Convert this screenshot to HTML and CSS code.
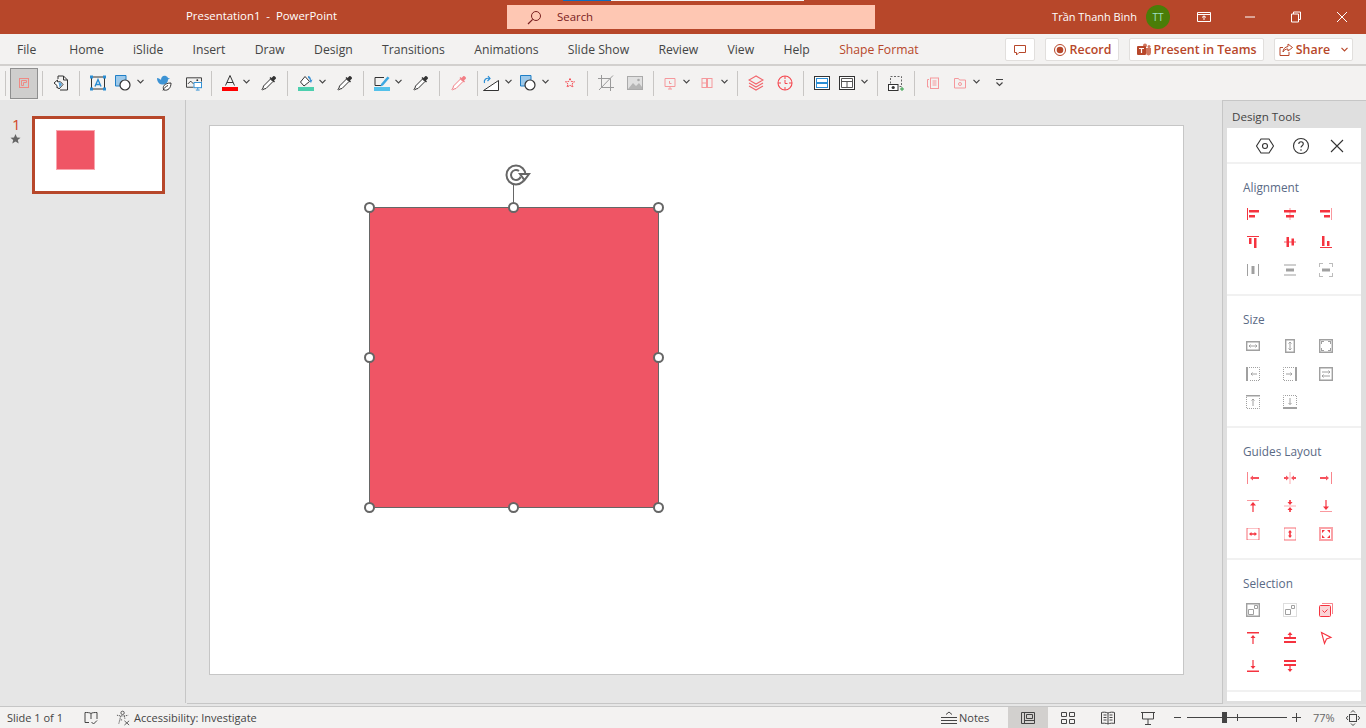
FILE: index.html
```html
<!DOCTYPE html>
<html lang="en">
<head>
  <meta charset="UTF-8">
  <title>Presentation1 - PowerPoint</title>
  <link rel="stylesheet" href="styles.css">
</head>
<body>

  <svg class="sprite" xmlns="http://www.w3.org/2000/svg">
    <defs>
      <!-- toolbar icons -->
      <symbol id="t-slide" viewBox="0 0 16 16"><g fill="none" stroke="#ef8a84"><rect x="3.5" y="3.5" width="9" height="9"/><path d="M5.5 5.5h5v2h-3v3h-2z"/></g></symbol>
      <symbol id="t-doc" viewBox="0 0 16 16"><path d="M5 1h5.500l4 4v10H7M10.500 1v4h4M5 1v3" fill="none" stroke="#333"/><path d="M1 8l3.500-3v1.800h3L10 9.500 6 14l-1-1.500-1 .5v-2.500z" fill="#fff" stroke="#333"/><path d="M5.500 7.500h2l1.500 2-2.500 3z" fill="#5aa5dc"/></symbol>
      <symbol id="t-textbox" viewBox="0 0 16 16"><rect x="1.500" y="2" width="13" height="12" fill="none" stroke="#333"/><g fill="#fff" stroke="#2a8dd4"><rect x=".5" y="1" width="2" height="2"/><rect x="13.500" y="1" width="2" height="2"/><rect x=".5" y="13" width="2" height="2"/><rect x="13.500" y="13" width="2" height="2"/></g><path d="M5 11.500L8 4.500l3 7M6 9.500h4" fill="none" stroke="#2a8dd4" stroke-width="1.400"/></symbol>
      <symbol id="t-shapes" viewBox="0 0 16 16"><path d="M.5.500h10.500v5.500a5 5 0 0 0-5 5H.5z" fill="#9dc9ea" stroke="#1f7fc7"/><circle cx="10" cy="10" r="5" fill="#fff" stroke="#333" stroke-width="1.200"/></symbol>
      <symbol id="t-bird" viewBox="0 0 16 16"><path d="M1 3c2 0 3 1 4 2 0-3 2-5 5-4 1 .5 1.500 1 2 2l2 .5-2 1c0 3-2 5-6 5-3 0-5-3-5-6.500z" fill="#3d93d4"/><path d="M8 15c-2-3 0-7 7-7 0 5-3 8-7 7zM7 15.500c1-3 3-4 5-5" fill="#fff" stroke="#333"/></symbol>
      <symbol id="t-pic" viewBox="0 0 17 16"><path d="M8 12.500H.5v-10h16v4" fill="none" stroke="#333"/><path d="M2 9l3-3 3 3" fill="none" stroke="#333"/><circle cx="12" cy="5" r="1" fill="#333"/><rect x="8.500" y="7.500" width="8" height="5.500" fill="#fff" stroke="#2a8dd4"/><path d="M12.500 13v2M10.500 15.500h4" stroke="#2a8dd4"/></symbol>
      <symbol id="t-fontcolor" viewBox="0 0 16 16"><path d="M3.500 10.500L8 .5l4.500 10M5 7.500h6" fill="none" stroke="#333"/><rect y="12" width="16" height="4" fill="#f00"/></symbol>
      <symbol id="t-dropper" viewBox="0 0 16 16"><path d="M9.500 4L2.500 11l-.5 2-1 1.500.5.500L3 14l2-.5 7-7z" fill="#fff" stroke="#333"/><path d="M8.500 3l1-1 1 1 2-2c1-.5 3 1.500 2.500 2.500l-2 2 1 1-1 1z" fill="#333"/></symbol>
      <symbol id="t-dropper-pink" viewBox="0 0 16 16"><path d="M9.500 4L2.500 11l-.5 2-1 1.500.5.500L3 14l2-.5 7-7z" fill="#fff" stroke="#f27f86"/><path d="M8.500 3l1-1 1 1 2-2c1-.5 3 1.500 2.500 2.500l-2 2 1 1-1 1z" fill="#f27f86"/></symbol>
      <symbol id="t-fill" viewBox="0 0 16 16"><path d="M7 1.500l4.500 5L6 11 2.500 7z" fill="#fff" stroke="#333"/><path d="M10 1c2 0 3 2 3 4l1.500-.5L13 8l-2-2.500 1 .5c0-1.500-1-3-2-3z" fill="#3d93d4"/><rect y="12" width="16" height="4" fill="#4ccfae"/></symbol>
      <symbol id="t-pen" viewBox="0 0 16 16"><path d="M10 2.500H1v8h6" fill="none" stroke="#333"/><path d="M7 9L13.500 1.500l2 1.500L9 10.500l-2.500 1z" fill="#3da8e0"/><rect y="12" width="16" height="4" fill="#54c1ea"/></symbol>
      <symbol id="t-connect" viewBox="0 0 16 16"><path d="M.5 15.500h15V5.500z" fill="#fff" stroke="#333"/><path d="M1.500 8c-1-3 1.500-5.500 5-4.500M5 1l2 2.500L4.500 6" fill="none" stroke="#2a8dd4" stroke-width="1.200"/></symbol>
      <symbol id="t-star" viewBox="0 0 16 16"><path d="M8 3.500l1.300 3 3.200.3-2.400 2.100.8 3.100L8 10.300l-2.900 1.700.8-3.100-2.400-2.100 3.200-.3z" fill="none" stroke="#f5474f" stroke-dasharray="2 .8"/></symbol>
      <symbol id="t-crop" viewBox="0 0 16 16"><path d="M3.500 0v12.500H16M0 3.500h12.500V16M15 .5L1 15" fill="none" stroke="#9a9a9a"/></symbol>
      <symbol id="t-image" viewBox="0 0 16 16"><rect x=".5" y="1.500" width="15" height="13" fill="#e0e0e0" stroke="#aaa"/><path d="M1 14l5-6 3 3 3-3 3 4v2z" fill="#b5b5b5"/><circle cx="11.500" cy="5" r="1.300" fill="#aaa"/></symbol>
      <symbol id="t-monitor" viewBox="0 0 16 16"><path d="M3 3.500h10v8H3zM6 14h4M8 11.500V14M7.500 6v2.500h2" fill="none" stroke="#f5989c"/></symbol>
      <symbol id="t-grid80" viewBox="0 0 16 16"><g fill="none" stroke="#f5989c"><rect x="3" y="3.500" width="4.500" height="9"/><rect x="8.500" y="3.500" width="4.500" height="9"/><path d="M3 8h4.500"/></g></symbol>
      <symbol id="t-layers" viewBox="0 0 16 16"><g fill="none" stroke="#f2656c" stroke-width="1.100"><path d="M8 1L1 5l7 4 7-4z"/><path d="M1 8l7 4 7-4M1 11l7 4 7-4"/></g></symbol>
      <symbol id="t-clock" viewBox="0 0 16 16"><circle cx="8" cy="8" r="7" fill="none" stroke="#f5474f" stroke-width="1.100"/><path d="M8 1v3M8 12v3M1 8h3M12 8h3M8 5v3.500h2.500" fill="none" stroke="#f5474f"/></symbol>
      <symbol id="t-arr1" viewBox="0 0 16 16"><rect x=".5" y="1.500" width="15" height="13" fill="#fff" stroke="#333"/><rect x="2.500" y="3.500" width="11" height="4" fill="none" stroke="#2a8dd4"/><rect x="2.500" y="8.500" width="11" height="4" fill="none" stroke="#2a8dd4"/></symbol>
      <symbol id="t-arr2" viewBox="0 0 16 16"><rect x=".5" y="1.500" width="15" height="13" fill="#fff" stroke="#333"/><path d="M2.500 3.500h11v9h-11zM2.500 6.500h11M8 6.500v6" fill="none" stroke="#555"/></symbol>
      <symbol id="t-shot" viewBox="0 0 16 16"><rect x="2.500" y="1.500" width="11" height="10" fill="none" stroke="#666" stroke-dasharray="2 1.500"/><rect x=".5" y="9.500" width="9.500" height="6" fill="#fff" stroke="#333"/><circle cx="5.200" cy="12.500" r="1.600" fill="#333"/><path d="M12 14h4M14 12v4" stroke="#2f9e44"/></symbol>
      <symbol id="t-pages" viewBox="0 0 16 16"><g fill="none" stroke="#f5989c"><rect x="5.500" y="3" width="8" height="10.500"/><path d="M4 4.500H2.500v7.500H4M7.500 6h4M7.500 8h4M7.500 10h4"/></g></symbol>
      <symbol id="t-folder" viewBox="0 0 16 16"><path d="M2.500 3.500h4l1 1.500h6v8h-11z" fill="none" stroke="#f5989c"/><circle cx="8" cy="9" r="1.500" fill="none" stroke="#f5989c"/></symbol>

      <!-- title and ribbon -->
      <symbol id="c-chev" viewBox="0 0 7 5"><path d="M.5 .8L3.500 3.800 6.500 .8" fill="none" stroke="#444" stroke-width="1.200"/></symbol>
      <symbol id="c-overflow" viewBox="0 0 7 8"><path d="M0 .5h7" stroke="#444"/><path d="M.5 3.500L3.500 6.500 6.500 3.500" fill="none" stroke="#444" stroke-width="1.200"/></symbol>

      <!-- design tools panel -->
      <symbol id="p-al-left" viewBox="0 0 14 14"><path d="M1 1h1v12H1z"/><path d="M3 3h10v2.500H3zM3 8h6v2.500H3z"/></symbol>
      <symbol id="p-al-center" viewBox="0 0 14 14"><path d="M6.500 1h1v12h-1z" opacity=".5"/><path d="M1 3h12v2.500H1zM3 8h8v2.500H3z"/></symbol>
      <symbol id="p-al-right" viewBox="0 0 14 14"><path d="M12 1h1v12h-1z" opacity=".5"/><path d="M1 3h10v2.500H1zM5 8h6v2.500H5z"/></symbol>
      <symbol id="p-al-top" viewBox="0 0 14 14"><path d="M1 1h12v1H1z"/><path d="M3 3h2.500v6H3zM8 3h2.500v10H8z"/></symbol>
      <symbol id="p-al-mid" viewBox="0 0 14 14"><path d="M1 6.500h12v1H1z" opacity=".8"/><path d="M3.500 2H6v10H3.500zM8.500 3.500H11v7H8.500z"/></symbol>
      <symbol id="p-al-bot" viewBox="0 0 14 14"><path d="M1 12h12v1H1z"/><path d="M3 1h2.500v10H3zM8 6h2.500v5H8z"/></symbol>
      <symbol id="p-dist-h" viewBox="0 0 14 14"><path d="M1 1h1v12H1zM12 1h1v12h-1z"/><path d="M5.500 3h3v8h-3z"/></symbol>
      <symbol id="p-dist-v" viewBox="0 0 14 14"><path d="M1 1.500h12v1H1zM1 11.500h12v1H1z"/><path d="M3 5.500h8v3H3z"/></symbol>
      <symbol id="p-dist-b" viewBox="0 0 14 14"><path d="M0 0h4v1H1v3H0zM10 0h4v4h-1V1h-3zM0 10h1v3h3v1H0zM13 10h1v4h-4v-1h3z" opacity=".7"/><path d="M3 5.500h8v3H3z"/></symbol>

      <symbol id="p-sz-w" viewBox="0 0 14 14"><path d="M.7 2.700h12.600v8.600H.7z" fill="none" stroke="currentColor" stroke-width="1.400"/><path d="M3 7h8M4.500 5.500L3 7l1.500 1.500M9.500 5.500L11 7 9.500 8.500" fill="none" stroke="currentColor"/></symbol>
      <symbol id="p-sz-h" viewBox="0 0 14 14"><path d="M2.700.7h8.600v12.600H2.700z" fill="none" stroke="currentColor" stroke-width="1.400"/><path d="M7 3v8M5.500 4.500L7 3l1.500 1.500M5.500 9.500L7 11l1.500-1.500" fill="none" stroke="currentColor"/></symbol>
      <symbol id="p-sz-b" viewBox="0 0 14 14"><path d="M.7.700h12.600v12.600H.7z" fill="none" stroke="currentColor" stroke-width="1.400"/><path d="M2 2h3v1H3v2H2zM9 2h3v3h-1V3H9zM2 9h1v2h2v1H2zM11 9h1v3H9v-1h2z"/></symbol>
      <symbol id="p-sz-l" viewBox="0 0 14 14"><path d="M0 0h2v14H0z"/><path d="M3 .5h10.500v13H3" fill="none" stroke="currentColor" stroke-dasharray="1 1"/><path d="M5 7h6M6.500 5.500L5 7l1.500 1.500" fill="none" stroke="currentColor"/></symbol>
      <symbol id="p-sz-r" viewBox="0 0 14 14"><path d="M12 0h2v14h-2z"/><path d="M11 .5H.5v13H11" fill="none" stroke="currentColor" stroke-dasharray="1 1"/><path d="M3 7h6M7.500 5.500L9 7 7.500 8.500" fill="none" stroke="currentColor"/></symbol>
      <symbol id="p-sz-x" viewBox="0 0 14 14"><path d="M.7.700h12.600v12.600H.7z" fill="none" stroke="currentColor" stroke-width="1.400"/><path d="M3 5h8M9.500 3.500L11 5 9.500 6.500M3 9h8M4.500 7.500L3 9l1.500 1.500" fill="none" stroke="currentColor"/></symbol>
      <symbol id="p-sz-t" viewBox="0 0 14 14"><path d="M0 0h14v1.500H0z"/><path d="M.5 2v11.500h13V2" fill="none" stroke="currentColor" stroke-dasharray="1 1"/><path d="M7 4v7M5.500 5.500L7 4l1.500 1.500" fill="none" stroke="currentColor"/></symbol>
      <symbol id="p-sz-d" viewBox="0 0 14 14"><path d="M0 12h14v2H0z"/><path d="M.5 11V.5h13V11" fill="none" stroke="currentColor" stroke-dasharray="1 1"/><path d="M7 3v6.500M5.500 8L7 9.500 8.500 8" fill="none" stroke="currentColor"/></symbol>

      <symbol id="p-g-l" viewBox="0 0 14 14"><path d="M1 1h1v12H1z" opacity=".6"/><path d="M4 7l3-2.500V6h6v2H7v1.500z" opacity=".85"/></symbol>
      <symbol id="p-g-c" viewBox="0 0 14 14"><path d="M6.500 1h1v12h-1z" opacity=".4"/><path d="M1 6h2V4.500L6 7 3 9.500V8H1zM13 6h-2V4.500L8 7l3 2.500V8h2z" opacity=".85"/></symbol>
      <symbol id="p-g-r" viewBox="0 0 14 14"><path d="M12 1h1v12h-1z" opacity=".6"/><path d="M10 7L7 4.500V6H1v2h6v1.500z" opacity=".85"/></symbol>
      <symbol id="p-g-t" viewBox="0 0 14 14"><path d="M1 1h12v1H1z" opacity=".5"/><path d="M7 3l3 3.500H7.600V13H6.400V6.500H4z"/></symbol>
      <symbol id="p-g-m" viewBox="0 0 14 14"><path d="M1 6.500h12v1H1z" opacity=".4"/><path d="M6.200 1h1.600v2H9.500L7 6 4.500 3h1.700zM6.200 13h1.600v-2H9.500L7 8l-2.500 3h1.700z"/></symbol>
      <symbol id="p-g-b" viewBox="0 0 14 14"><path d="M1 12h12v1H1z" opacity=".5"/><path d="M7 11L4 7.500h2.400V1h1.200v6.500H10z"/></symbol>
      <symbol id="p-g-w" viewBox="0 0 14 14"><path d="M.5 1h1v12h-1zM12.500 1h1v12h-1z" opacity=".7"/><path d="M1.500 1.500h11M1.500 12.500h11" stroke="currentColor" opacity=".6" stroke-dasharray="1 1"/><path d="M3 7l2.500-2v1.200h3V5L11 7 8.500 9V7.800h-3V9z"/></symbol>
      <symbol id="p-g-h" viewBox="0 0 14 14"><path d="M1 .5h12v1H1zM1 12.500h12v1H1z" opacity=".7"/><path d="M1.500 1.500v11M12.500 1.500v11" stroke="currentColor" opacity=".5" stroke-dasharray="1 1"/><path d="M7 3l2 2.500H7.800v3H9L7 11 5 8.500h1.200v-3H5z"/></symbol>
      <symbol id="p-g-a" viewBox="0 0 14 14"><path d="M0 0h14v14H0zM2 2v10h10V2z" fill-rule="evenodd" opacity=".45"/><path d="M3 3h3L3 6zM11 3H8l3 3zM3 11h3L3 8zM11 11H8l3-3z"/></symbol>

      <symbol id="p-s-a" viewBox="0 0 14 14"><path d="M.7.700h12.600v12.600H.7z" fill="none" stroke="currentColor" stroke-width="1.400"/><path d="M2.500 6.500h5v5h-5zM8.500 2.500h3v3h-3z" fill="none" stroke="currentColor"/></symbol>
      <symbol id="p-s-b" viewBox="0 0 14 14"><path d="M.5.500h13v13H.5z" fill="none" stroke="currentColor" stroke-dasharray="1 1" opacity=".7"/><path d="M2.500 6.500h5v5h-5zM8.500 2.500h3v3h-3z" fill="none" stroke="currentColor"/></symbol>
      <symbol id="p-s-c" viewBox="0 0 14 14"><path d="M3 .5h10.500V11" fill="none" stroke="currentColor" opacity=".6"/><rect x=".5" y="2.500" width="11" height="11" rx="1" fill="#fbd5d7" stroke="currentColor"/><path d="M3.500 7.500l2 2 3-3" fill="none" stroke="currentColor"/></symbol>
      <symbol id="p-s-d" viewBox="0 0 14 14"><path d="M1 1h12v1.500H1z"/><path d="M7 4l2.500 3H7.600v6H6.400V7H4.500z"/></symbol>
      <symbol id="p-s-e" viewBox="0 0 14 14"><path d="M1 6h12v2H1zM1 10h12v2H1z"/><path d="M7 1l2.500 3H7.600v2H6.400V4H4.500z"/></symbol>
      <symbol id="p-s-f" viewBox="0 0 14 14"><path d="M2.500 1.500l9.500 5-4.500 1.500-2 4.500z" fill="none" stroke="currentColor" stroke-width="1.100"/></symbol>
      <symbol id="p-s-g" viewBox="0 0 14 14"><path d="M1 11.500h12V13H1z"/><path d="M7 10L4.500 7h1.900V1h1.200v6h1.900z"/></symbol>
      <symbol id="p-s-h" viewBox="0 0 14 14"><path d="M1 1h12v2H1zM1 5h12v2H1z"/><path d="M7 13L4.500 10h1.900V7h1.200v3h1.900z"/></symbol>
    </defs>
  </svg>

  <div class="load-bar"><div class="load-bar-fill"></div></div>

  <header class="titlebar">
    <div class="doc-title">Presentation1&nbsp; - &nbsp;PowerPoint</div>
    <div class="search">
      <svg class="search-icon" viewBox="0 0 15 15"><circle cx="9" cy="6" r="4.500" fill="none" stroke="#7a2020"/><path d="M5.700 9.300L1 14" stroke="#7a2020" stroke-width="1.200"/></svg>
      <span>Search</span>
    </div>
    <div class="user-name">Trần Thanh Bình</div>
    <div class="avatar">TT</div>
    <div class="win-buttons">
      <svg class="win-btn" viewBox="0 0 14 12"><path d="M.5 1.500h13v9H.5zM.5 3.500h13M7 9V5M5 6.500L7 4.800l2 1.700" fill="none" stroke="#fff"/></svg>
      <svg class="win-btn" viewBox="0 0 14 12"><path d="M2 6h10" stroke="#fff"/></svg>
      <svg class="win-btn" viewBox="0 0 14 12"><path d="M2.500 3h7v8h-7zM4.500 3V1h7v7.500H9.500" fill="none" stroke="#fff"/></svg>
      <svg class="win-btn" viewBox="0 0 14 12"><path d="M2 1l10 10M12 1L2 11" stroke="#fff"/></svg>
    </div>
  </header>

  <nav class="tabs">
    <a class="tab tab-file">File</a>
    <a class="tab">Home</a>
    <a class="tab">iSlide</a>
    <a class="tab">Insert</a>
    <a class="tab">Draw</a>
    <a class="tab">Design</a>
    <a class="tab">Transitions</a>
    <a class="tab">Animations</a>
    <a class="tab">Slide Show</a>
    <a class="tab">Review</a>
    <a class="tab">View</a>
    <a class="tab">Help</a>
    <a class="tab tab-active">Shape Format</a>
    <div class="tab-actions">
      <button class="action action-comment">
        <svg class="action-icon" viewBox="0 0 14 14"><path d="M1.500 2.500h11v7H6L3.500 12V9.500h-2z" fill="none" stroke="#b7472a"/></svg>
      </button>
      <button class="action action-record">
        <svg class="action-icon" viewBox="0 0 14 14"><circle cx="7" cy="7" r="5.500" fill="none" stroke="#b7472a"/><circle cx="7" cy="7" r="3.300" fill="#b7472a"/></svg>
        Record
      </button>
      <button class="action action-teams">
        <svg class="action-icon" viewBox="0 0 14 14"><circle cx="8" cy="2.500" r="2" fill="#d0775f"/><circle cx="12" cy="3.500" r="1.500" fill="#d0775f"/><path d="M9 5h5v5a2.500 2.500 0 0 1-5 0z" fill="#d0775f"/><rect y="3" width="9" height="9" rx="1" fill="#b7472a"/><path d="M2 5.500h5M4.500 5.500V10" stroke="#fff" stroke-width="1.200"/></svg>
        Present in Teams
      </button>
      <button class="action action-share">
        <svg class="action-icon" viewBox="0 0 14 14"><path d="M4 4.500H1v8h9V9" fill="none" stroke="#b7472a"/><path d="M9 1l4.500 3.500L9 8V6C6.500 6 5 7 4 9c0-3 2-5 5-5.500z" fill="none" stroke="#b7472a"/></svg>
        Share
        <svg class="share-chev" viewBox="0 0 7 5"><path d="M.5 .8L3.500 3.800 6.500 .8" fill="none" stroke="#b7472a" stroke-width="1.200"/></svg>
      </button>
    </div>
  </nav>

  <div class="toolbar">
    <div class="tgroup g37 first-group"><div class="t-selected"><svg class="ti"><use href="#t-slide"/></svg></div></div>
    <div class="tgroup g37"><svg class="ti m10"><use href="#t-doc"/></svg></div>
    <div class="tgroup g132">
      <svg class="ti m10"><use href="#t-textbox"/></svg>
      <svg class="ti m9"><use href="#t-shapes"/></svg>
      <svg class="ch m6"><use href="#c-chev"/></svg>
      <svg class="ti m12"><use href="#t-bird"/></svg>
      <svg class="ti m14"><use href="#t-pic"/></svg>
    </div>
    <div class="tgroup g76">
      <svg class="ti m10"><use href="#t-fontcolor"/></svg>
      <svg class="ch m5"><use href="#c-chev"/></svg>
      <svg class="ti m11"><use href="#t-dropper"/></svg>
    </div>
    <div class="tgroup g76">
      <svg class="ti m10"><use href="#t-fill"/></svg>
      <svg class="ch m5"><use href="#c-chev"/></svg>
      <svg class="ti m11"><use href="#t-dropper"/></svg>
    </div>
    <div class="tgroup g76">
      <svg class="ti m10"><use href="#t-pen"/></svg>
      <svg class="ch m5"><use href="#c-chev"/></svg>
      <svg class="ti m11"><use href="#t-dropper"/></svg>
    </div>
    <div class="tgroup g38"><svg class="ti m11"><use href="#t-dropper-pink"/></svg></div>
    <div class="tgroup g110">
      <svg class="ti m5"><use href="#t-connect"/></svg>
      <svg class="ch m6"><use href="#c-chev"/></svg>
      <svg class="ti m8"><use href="#t-shapes"/></svg>
      <svg class="ch m6"><use href="#c-chev"/></svg>
      <svg class="ti m13"><use href="#t-star"/></svg>
    </div>
    <div class="tgroup g66">
      <svg class="ti m10"><use href="#t-crop"/></svg>
      <svg class="ti m13"><use href="#t-image"/></svg>
    </div>
    <div class="tgroup g84">
      <svg class="ti m8"><use href="#t-monitor"/></svg>
      <svg class="ch m5"><use href="#c-chev"/></svg>
      <svg class="ti m9"><use href="#t-grid80"/></svg>
      <svg class="ch m6"><use href="#c-chev"/></svg>
    </div>
    <div class="tgroup g66">
      <svg class="ti m10"><use href="#t-layers"/></svg>
      <svg class="ti m13"><use href="#t-clock"/></svg>
    </div>
    <div class="tgroup g74">
      <svg class="ti m10"><use href="#t-arr1"/></svg>
      <svg class="ti m9"><use href="#t-arr2"/></svg>
      <svg class="ch m6"><use href="#c-chev"/></svg>
    </div>
    <div class="tgroup g37"><svg class="ti m10"><use href="#t-shot"/></svg></div>
    <div class="tgroup">
      <svg class="ti m10"><use href="#t-pages"/></svg>
      <svg class="ti m11"><use href="#t-folder"/></svg>
      <svg class="ch m5"><use href="#c-chev"/></svg>
      <svg class="ch2 m16"><use href="#c-overflow"/></svg>
    </div>
  </div>

  <main class="workspace">
    <aside class="thumbs">
      <div class="thumb-meta">
        <div class="thumb-num">1</div>
        <svg class="thumb-star" viewBox="0 0 12 12"><path d="M6.500 1l1.500 3.500 3.500.3-2.700 2.300.9 3.500-3.200-2-3.200 2 .9-3.500L1.500 4.800 5 4.500z" fill="#666"/></svg>
      </div>
      <div class="thumb">
        <div class="thumb-shape"></div>
      </div>
    </aside>

    <section class="editor">
      <div class="slide">
        <div class="shape"></div>
        <div class="rotate-line"></div>
        <svg class="rotate-handle" viewBox="0 0 26 24"><circle cx="11" cy="12" r="9.500" fill="none" stroke="#666" stroke-width="2"/><path d="M16 12a5 5 0 1 1-2-4" fill="none" stroke="#666" stroke-width="2"/><path d="M14 12l11-1-5.500 7z" fill="#fff"/><path d="M15 11h9l-4.500 6z" fill="none" stroke="#666" stroke-width="2"/></svg>
        <i class="handle h-tl"></i><i class="handle h-tm"></i><i class="handle h-tr"></i>
        <i class="handle h-ml"></i><i class="handle h-mr"></i>
        <i class="handle h-bl"></i><i class="handle h-bm"></i><i class="handle h-br"></i>
      </div>
    </section>

    <aside class="design">
      <div class="design-title">Design Tools</div>
      <div class="design-body">
        <div class="design-head">
          <svg class="head-icon" viewBox="0 0 18 18"><path d="M5 2h8l4.500 7L13 16H5L.5 9z" fill="none" stroke="#333" stroke-width="1.100"/><circle cx="9" cy="9" r="2.500" fill="none" stroke="#333" stroke-width="1.100"/></svg>
          <svg class="head-icon" viewBox="0 0 18 18"><circle cx="9" cy="9" r="7.500" fill="none" stroke="#333" stroke-width="1.100"/><path d="M6.800 7c0-3 4.500-3 4.500 0 0 1.700-2.300 1.700-2.300 3.500" fill="none" stroke="#333" stroke-width="1.100"/><circle cx="9" cy="13" r=".8" fill="#333"/></svg>
          <svg class="head-icon" viewBox="0 0 18 18"><path d="M3 3l12 12M15 3L3 15" stroke="#333" stroke-width="1.100"/></svg>
        </div>

        <section class="tools">
          <h3>Alignment</h3>
          <div class="tool-grid">
            <svg class="pi red"><use href="#p-al-left"/></svg>
            <svg class="pi red"><use href="#p-al-center"/></svg>
            <svg class="pi red"><use href="#p-al-right"/></svg>
            <svg class="pi red"><use href="#p-al-top"/></svg>
            <svg class="pi red"><use href="#p-al-mid"/></svg>
            <svg class="pi red"><use href="#p-al-bot"/></svg>
            <svg class="pi gray"><use href="#p-dist-h"/></svg>
            <svg class="pi gray"><use href="#p-dist-v"/></svg>
            <svg class="pi gray"><use href="#p-dist-b"/></svg>
          </div>
        </section>

        <section class="tools">
          <h3>Size</h3>
          <div class="tool-grid">
            <svg class="pi gray"><use href="#p-sz-w"/></svg>
            <svg class="pi gray"><use href="#p-sz-h"/></svg>
            <svg class="pi gray"><use href="#p-sz-b"/></svg>
            <svg class="pi gray"><use href="#p-sz-l"/></svg>
            <svg class="pi gray"><use href="#p-sz-r"/></svg>
            <svg class="pi gray"><use href="#p-sz-x"/></svg>
            <svg class="pi gray"><use href="#p-sz-t"/></svg>
            <svg class="pi gray"><use href="#p-sz-d"/></svg>
          </div>
        </section>

        <section class="tools">
          <h3>Guides Layout</h3>
          <div class="tool-grid">
            <svg class="pi red"><use href="#p-g-l"/></svg>
            <svg class="pi red"><use href="#p-g-c"/></svg>
            <svg class="pi red"><use href="#p-g-r"/></svg>
            <svg class="pi red"><use href="#p-g-t"/></svg>
            <svg class="pi red"><use href="#p-g-m"/></svg>
            <svg class="pi red"><use href="#p-g-b"/></svg>
            <svg class="pi red"><use href="#p-g-w"/></svg>
            <svg class="pi red"><use href="#p-g-h"/></svg>
            <svg class="pi red"><use href="#p-g-a"/></svg>
          </div>
        </section>

        <section class="tools">
          <h3>Selection</h3>
          <div class="tool-grid">
            <svg class="pi gray"><use href="#p-s-a"/></svg>
            <svg class="pi gray"><use href="#p-s-b"/></svg>
            <svg class="pi red"><use href="#p-s-c"/></svg>
            <svg class="pi red"><use href="#p-s-d"/></svg>
            <svg class="pi red"><use href="#p-s-e"/></svg>
            <svg class="pi red"><use href="#p-s-f"/></svg>
            <svg class="pi red"><use href="#p-s-g"/></svg>
            <svg class="pi red"><use href="#p-s-h"/></svg>
          </div>
        </section>
      </div>
    </aside>
  </main>

  <footer class="status">
    <span class="status-slide">Slide 1 of 1</span>
    <svg class="status-book" viewBox="0 0 14 14"><path d="M7 2.500C6 1.500 3 1.500 1 1.500v10h4M7 2.500c1-1 4-1 6-1V8M7 2.500V8M7.500 11l2 2 3.500-3.500" fill="none" stroke="#444"/></svg>
    <svg class="status-access" viewBox="0 0 16 16"><circle cx="7" cy="2.500" r="1.800" fill="none" stroke="#555"/><path d="M1 5c3 1 9 1 12 0M5 6l-2 8M9 6l.5 3M5 10h2" fill="none" stroke="#555" stroke-dasharray="1.500 .8"/><path d="M9 11l5 4.500M14 11l-5 4.500" stroke="#555"/></svg>
    <span class="status-a11y">Accessibility: Investigate</span>

    <div class="status-right">
      <svg class="notes-icon" viewBox="0 0 16 14"><path d="M0 6.500h16M0 9.500h16M0 12.500h16M5 3.500l3-2.500 3 2.500" fill="none" stroke="#444"/></svg>
      <span class="notes-label">Notes</span>
      <div class="view-btn view-active"><svg class="view-icon" viewBox="0 0 14 14"><path d="M.5 1.500h13v11H.5zM3.500 1.500v11M3.500 9.500h10M5.500 3.500h6v4h-6z" fill="none" stroke="#444"/></svg></div>
      <div class="view-btn"><svg class="view-icon" viewBox="0 0 14 14"><path d="M.5 1.500h5v4h-5zM8.500 1.500h5v4h-5zM.5 8.500h5v4h-5zM8.500 8.500h5v4h-5z" fill="none" stroke="#444"/></svg></div>
      <div class="view-btn"><svg class="view-icon" viewBox="0 0 14 14"><path d="M7 2C5 1 2 1 .5 1.500v11C2 12 5 12 7 13c2-1 5-1 6.500-.5v-11C12 1 9 1 7 2zM7 2v11M2.500 4h3M2.500 6.500h3M2.500 9h3M8.500 4h3M8.500 6.500h3M8.500 9h3" fill="none" stroke="#444"/></svg></div>
      <div class="view-btn"><svg class="view-icon" viewBox="0 0 14 14"><path d="M0 1.500h14M1.500 1.500v6.500h11V1.500M7 8v5.500M4 13.500h6" fill="none" stroke="#444"/></svg></div>
      <div class="zoom-minus"></div>
      <div class="zoom-track"><i class="zoom-tick"></i><i class="zoom-thumb"></i></div>
      <div class="zoom-plus"></div>
      <span class="zoom-value">77%</span>
      <svg class="fit-icon" viewBox="0 0 14 16"><rect x="3.500" y="4.500" width="7" height="7" fill="none" stroke="#444"/><path d="M5 2.500l2-2 2 2M5 13.500l2 2 2-2M2 6L.3 8 2 10M12 6l1.700 2L12 10" fill="none" stroke="#444"/></svg>
    </div>
  </footer>

</body>
</html>
```

FILE: styles.css
```css
html, body {
  margin: 0;
  height: 100%;
}

body {
  display: flex;
  flex-direction: column;
  width: 1366px;
  height: 728px;
  overflow: hidden;
  background: #e6e6e6;
  color: #444;
  font-family: "Open Sans", "Noto Sans", sans-serif;
  font-size: 12px;
}

.sprite {
  display: none;
}

/* thin loading strip at the very top */
.load-bar {
  position: absolute;
  left: 563px;
  top: 0;
  width: 241px;
  height: 1px;
  background: #f4f4f4;
}

.load-bar-fill {
  width: 48px;
  height: 1px;
  background: #0f6cbd;
}

/* title bar */
.titlebar {
  display: flex;
  align-items: center;
  flex: 0 0 34px;
  background: #b7472a;
  color: #fff;
}

.doc-title {
  width: 321px;
  padding-left: 186px;
  font-size: 11.4px;
  line-height: 14px;
  margin-top: -2px;
}

.search {
  display: flex;
  align-items: center;
  width: 368px;
  height: 24px;
  background: #fec7b3;
  color: #7a2020;
  font-size: 11.4px;
}

.search span {
  margin-top: -2px;
}

.search-icon {
  width: 15px;
  height: 15px;
  margin: 0 15px 0 20px;
}

.user-name {
  width: 262px;
  text-align: right;
  font-size: 11px;
  margin-top: -1px;
}

.avatar {
  width: 24px;
  height: 24px;
  margin-left: 9px;
  border-radius: 50%;
  background: #4a7d08;
  color: #9fe0c8;
  font-size: 10px;
  line-height: 24px;
  text-align: center;
}

.win-buttons {
  display: flex;
  margin-left: 27px;
  gap: 32px;
}

.win-btn {
  width: 14px;
  height: 12px;
}

/* ribbon tabs */
.tabs {
  display: flex;
  align-items: center;
  flex: 0 0 30px;
  padding-left: 17px;
  background: #f3f2f1;
  border-bottom: 2px solid #d2d0ce;
  font-size: 12.2px;
}

.tab {
  margin-right: 29.3px;
  color: #444;
  white-space: nowrap;
}

.tab-file {
  margin-right: 33px;
}

.tab-active {
  margin-right: 0;
  color: #b7472a;
}

.tab-actions {
  display: flex;
  position: absolute;
  left: 1005px;
  top: 38px;
  gap: 10px;
}

.action {
  display: flex;
  align-items: center;
  justify-content: center;
  gap: 3px;
  height: 23px;
  padding: 0;
  background: #fff;
  border: 1px solid #e1dfdd;
  border-radius: 2px;
  color: #b7472a;
  font-family: inherit;
  font-size: 12.4px;
  font-weight: 600;
}

.action-icon {
  width: 14px;
  height: 14px;
}

.action-comment { width: 30px; }
.action-record { width: 74px; }
.action-teams { width: 135px; }
.action-share { width: 79px; }

.share-chev {
  width: 7px;
  height: 5px;
  margin-left: 8px;
}

/* quick access toolbar */
.toolbar {
  display: flex;
  align-items: center;
  flex: 0 0 34px;
  padding-left: 5px;
  background: #f3f2f1;
}

.tgroup {
  display: flex;
  align-items: center;
  box-sizing: border-box;
  height: 25px;
  border-left: 1px solid #c8c6c4;
}

.g37 { width: 37px; }
.g38 { width: 38px; }
.g66 { width: 66px; }
.g74 { width: 74px; }
.g76 { width: 76px; }
.g84 { width: 84px; }
.g110 { width: 110px; }
.g132 { width: 132px; }

.t-selected {
  display: flex;
  align-items: center;
  justify-content: center;
  box-sizing: border-box;
  width: 28px;
  height: 31px;
  margin-left: 4px;
  background: #cfcecd;
  border: 1px solid #8f8f8f;
}

.ti {
  flex: none;
  width: 16px;
  height: 16px;
}

.ch {
  flex: none;
  width: 7px;
  height: 5px;
  margin-bottom: 3px;
}

.ch2 {
  flex: none;
  width: 7px;
  height: 8px;
}

.m5 { margin-left: 5px; }
.m6 { margin-left: 6px; }
.m8 { margin-left: 8px; }
.m9 { margin-left: 9px; }
.m10 { margin-left: 10px; }
.m11 { margin-left: 11px; }
.m12 { margin-left: 12px; }
.m13 { margin-left: 13px; }
.m14 { margin-left: 14px; }
.m16 { margin-left: 16px; }

/* main working area */
.workspace {
  display: flex;
  flex: 1;
  min-height: 0;
  background: #e6e6e6;
}

.thumbs {
  display: flex;
  box-sizing: border-box;
  flex: 0 0 186px;
  height: 603px;
  padding: 16px 0 0 9px;
  border-right: 1px solid #c6c6c6;
}

.thumb-meta {
  width: 23px;
}

.thumb-num {
  padding-left: 3px;
  color: #d24726;
  font-size: 15px;
  line-height: 16px;
}

.thumb-star {
  display: block;
  width: 12px;
  height: 12px;
  margin-top: 1px;
}

.thumb {
  box-sizing: border-box;
  width: 133px;
  height: 78px;
  padding: 11px 0 0 21px;
  background: #fff;
  border: 3px solid #b7472a;
}

.thumb-shape {
  width: 37px;
  height: 38px;
  margin: 1px 0 0 1px;
  background: #ef5565;
  outline: 1px solid #f9a5ae;
}

.editor {
  box-sizing: border-box;
  flex: 0 0 1035px;
  height: 604px;
  padding: 25px 0 0 22px;
  border-bottom: 1px solid #c6c6c6;
  margin-left: 1px;
}

/* free canvas: the selected shape and its handles */
.slide {
  position: relative;
  box-sizing: border-box;
  width: 975px;
  height: 550px;
  background: #fff;
  border: 1px solid #c6c6c6;
}

.shape {
  position: absolute;
  left: 159px;
  top: 81px;
  box-sizing: border-box;
  width: 290px;
  height: 301px;
  background: #ef5565;
  border: 1px solid #666;
}

.rotate-line {
  position: absolute;
  left: 303px;
  top: 58px;
  width: 1px;
  height: 24px;
  background: #666;
}

.rotate-handle {
  position: absolute;
  left: 295px;
  top: 37px;
  width: 26px;
  height: 24px;
}

.handle {
  position: absolute;
  box-sizing: border-box;
  width: 11px;
  height: 11px;
  background: #fff;
  border: 2px solid #666;
  border-radius: 50%;
}

.h-tl { left: 154px; top: 76px; }
.h-tm { left: 298px; top: 76px; }
.h-tr { left: 443px; top: 76px; }
.h-ml { left: 154px; top: 226px; }
.h-mr { left: 443px; top: 226px; }
.h-bl { left: 154px; top: 376px; }
.h-bm { left: 298px; top: 376px; }
.h-br { left: 443px; top: 376px; }

/* design tools side panel */
.design {
  box-sizing: border-box;
  flex: 0 0 144px;
  height: 604px;
  background: #dfdfdf;
  border-left: 1px solid #c6c6c6;
  border-top: 1px solid #c6c6c6;
  padding-left: 4px;
}

.design-title {
  height: 27px;
  padding-left: 5px;
  color: #444;
  font-size: 11.6px;
  line-height: 31px;
}

.design-body {
  width: 134px;
  height: 573px;
  background: #fff;
  overflow: hidden;
}

.design-head {
  display: flex;
  align-items: center;
  box-sizing: border-box;
  height: 36px;
  padding: 2px 0 0 29px;
  gap: 18px;
  border-bottom: 2px solid #f1f1f1;
}

.head-icon {
  width: 18px;
  height: 18px;
}

.tools {
  box-sizing: border-box;
  height: 132px;
  padding-left: 8px;
  border-bottom: 2px solid #f1f1f1;
}

.tools h3 {
  height: 36px;
  margin: 0;
  padding: 15px 0 0 8px;
  box-sizing: border-box;
  color: #5a6a85;
  font-size: 11.8px;
  font-weight: 400;
  line-height: 17px;
}

.tool-grid {
  display: grid;
  grid-template-columns: repeat(3, 36.5px);
  grid-auto-rows: 28px;
  justify-items: center;
  align-items: center;
}

.pi {
  width: 14px;
  height: 14px;
  fill: currentColor;
}

.red { color: #f5333f; }
.gray { color: #a0a0a0; }

/* status bar */
.status {
  display: flex;
  align-items: center;
  flex: 0 0 21px;
  height: 21px;
  border-top: 1px solid #c6c6c6;
  background: #f3f2f1;
  font-size: 11px;
  color: #444;
}

.status-slide {
  width: 77px;
  padding-left: 7px;
}

.status-book {
  width: 14px;
  height: 14px;
}

.status-access {
  width: 15px;
  height: 16px;
  margin-left: 18px;
}

.status-a11y {
  margin-left: 3px;
  white-space: nowrap;
}

.status-right {
  display: flex;
  align-items: center;
  align-self: stretch;
  margin-left: auto;
  padding-right: 6px;
}

.notes-icon {
  width: 16px;
  height: 14px;
}

.notes-label {
  width: 49px;
  margin-left: 2px;
  font-size: 11px;
}

.view-btn {
  display: flex;
  align-items: center;
  justify-content: center;
  width: 40px;
  height: 100%;
}

.view-active {
  background: #d2d0ce;
}

.view-icon {
  width: 14px;
  height: 14px;
}

.zoom-minus {
  width: 7px;
  height: 1px;
  margin-left: 6px;
  background: #444;
}

.zoom-track {
  position: relative;
  width: 100px;
  height: 1px;
  margin-left: 6px;
  background: #444;
}

.zoom-tick {
  position: absolute;
  left: 50px;
  top: -3px;
  width: 1px;
  height: 7px;
  background: #444;
}

.zoom-thumb {
  position: absolute;
  left: 35px;
  top: -5px;
  width: 5px;
  height: 11px;
  background: #444;
}

.zoom-plus {
  width: 9px;
  height: 9px;
  margin-left: 5px;
  background: linear-gradient(#444, #444) center / 9px 1px no-repeat,
              linear-gradient(#444, #444) center / 1px 9px no-repeat;
}

.zoom-value {
  width: 33px;
  margin-left: 12px;
  font-size: 11px;
  color: #666;
}

.fit-icon {
  width: 14px;
  height: 16px;
}
```
